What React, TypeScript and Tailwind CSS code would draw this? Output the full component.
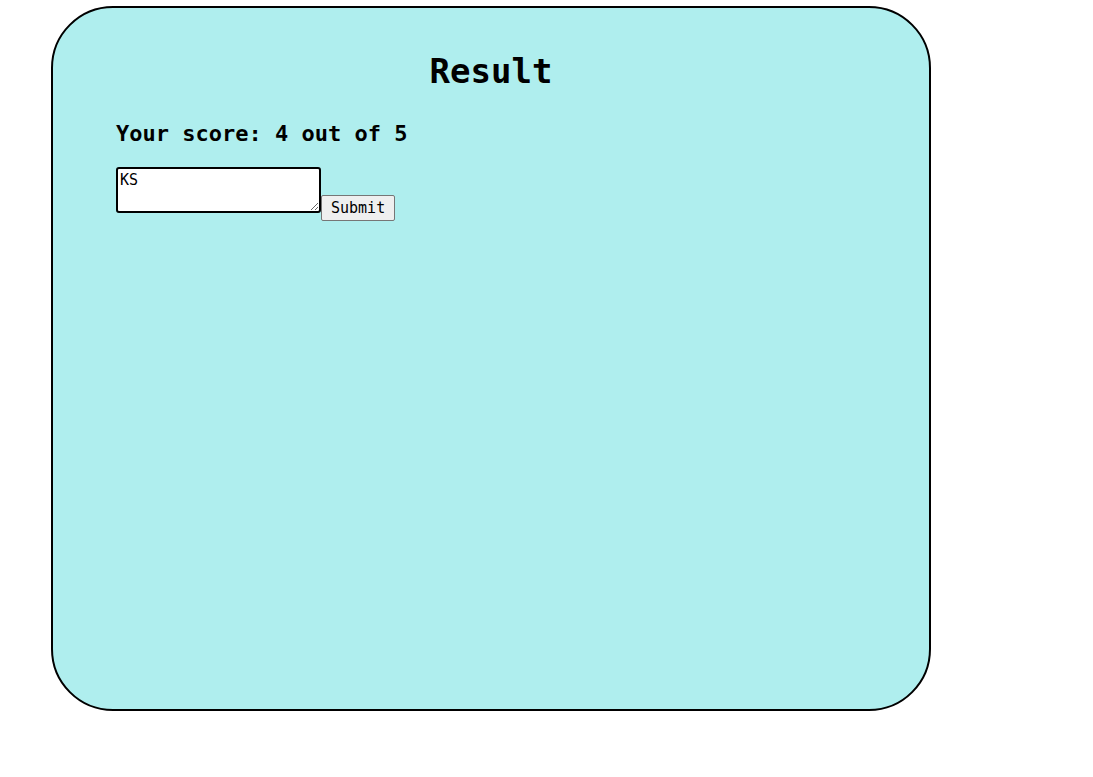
import { useState } from "react";

export default function App() {
  const [name, setName] = useState("KS");
  const score = 4;
  const total = 5;

  return (
    <div className="min-h-screen bg-white pt-[6px] pl-[51px] font-['DejaVu_Sans_Mono','Liberation_Mono',monospace]">
      <div className="w-[880px] h-[705px] bg-[#afeeee] border-2 border-black rounded-[62px] px-[63px] pt-[43px]">
        <h1 className="text-center text-[34px] leading-[40px] font-bold text-black">Result</h1>
        <p className="mt-[29px] text-[22px] leading-[28px] font-bold text-black">
          Your score: {score} out of {total}
        </p>
        <div className="mt-[19px]">
          <textarea
            value={name}
            onChange={(e) => setName(e.target.value)}
            className="w-[205px] h-[46px] align-baseline bg-white border-2 border-black rounded-[3px] px-[2px] py-[2px] text-[15px] leading-[18px] text-black outline-none resize"
          />
          <button className="h-[26px] px-[9px] align-baseline bg-[#efefef] border border-[#767676] rounded-[2px] text-[15px] text-black">
            Submit
          </button>
        </div>
      </div>
    </div>
  );
}
